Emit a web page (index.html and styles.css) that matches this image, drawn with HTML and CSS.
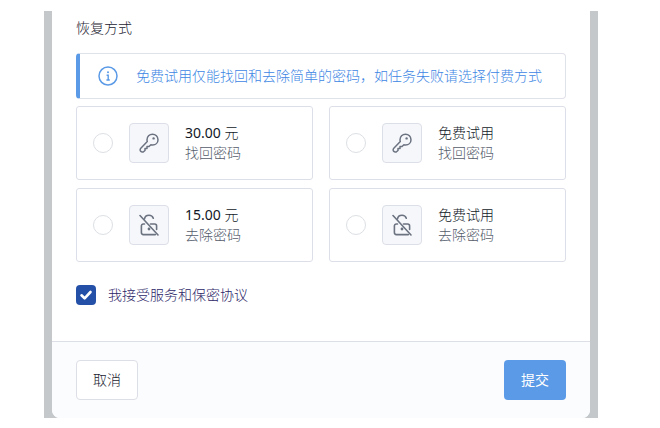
FILE: index.html
```html
<!DOCTYPE html>
<html lang="zh-CN">
<head>
<meta charset="utf-8">
<title>恢复方式</title>
<link rel="stylesheet" href="styles.css">
</head>
<body>
<div class="backdrop">
  <div class="modal">
    <div class="content">
      <div class="title">恢复方式</div>
      <div class="alert">
        <svg class="alert-icon" viewBox="0 0 20 20" width="20" height="20" fill="none" stroke="#5b9ae6" stroke-width="1.5">
          <circle cx="10" cy="10" r="9"/>
          <path d="M8.6 9.2H10.2V14M8.4 14H11.8" stroke-width="1.4"/>
          <circle cx="10" cy="6.2" r="1" fill="#5b9ae6" stroke="none"/>
        </svg>
        <span>免费试用仅能找回和去除简单的密码，如任务失败请选择付费方式</span>
      </div>
      <div class="options">
        <div class="card">
          <span class="radio"></span>
          <span class="tile">
            <svg viewBox="0 0 20 20" width="20" height="20" fill="none" stroke="#6b7280" stroke-width="1.5" stroke-linejoin="round">
              <path d="M13.5 1.2C16.6 1.2 19 3.6 19 6.7C19 9.8 16.6 12 13.6 12C13 12 12.4 11.9 11.9 11.7L10 13.5H8V15.5H6V17.5L4.5 18.8C3.4 19.4 1.8 18.8 1.3 17.6C1 16.7 1.2 15.8 1.8 15.2L8.3 8.5C8.1 8 8 7.3 8 6.7C8 3.6 10.4 1.2 13.5 1.2Z"/>
              <circle cx="14.6" cy="5.4" r="1.2" fill="#6b7280" stroke="none"/>
            </svg>
          </span>
          <span class="text"><span class="price"><span class="amount">30.00</span> 元</span><span class="sub">找回密码</span></span>
        </div>
        <div class="card">
          <span class="radio"></span>
          <span class="tile">
            <svg viewBox="0 0 20 20" width="20" height="20" fill="none" stroke="#6b7280" stroke-width="1.5" stroke-linejoin="round">
              <path d="M13.5 1.2C16.6 1.2 19 3.6 19 6.7C19 9.8 16.6 12 13.6 12C13 12 12.4 11.9 11.9 11.7L10 13.5H8V15.5H6V17.5L4.5 18.8C3.4 19.4 1.8 18.8 1.3 17.6C1 16.7 1.2 15.8 1.8 15.2L8.3 8.5C8.1 8 8 7.3 8 6.7C8 3.6 10.4 1.2 13.5 1.2Z"/>
              <circle cx="14.6" cy="5.4" r="1.2" fill="#6b7280" stroke="none"/>
            </svg>
          </span>
          <span class="text"><span class="price">免费试用</span><span class="sub">找回密码</span></span>
        </div>
        <div class="card">
          <span class="radio"></span>
          <span class="tile">
            <svg viewBox="0 0 20 22" width="20" height="22" fill="none" stroke="#6b7280" stroke-width="1.6" stroke-linecap="round" stroke-linejoin="round">
              <path d="M1 1.5 19 21"/>
              <path d="M5.5 5C5.8 2.8 7.8 1.2 10 1.2C12 1.2 13.7 2.4 14.3 4.2"/>
              <path d="M5.5 10H4.4C3.2 10 2.4 10.8 2.4 12V18.6C2.4 19.8 3.2 20.6 4.4 20.6H16.4M11.5 10H15.6C16.8 10 17.6 10.8 17.6 12V15.5"/>
              <circle cx="10" cy="15" r="1.4" fill="#6b7280" stroke="none"/>
            </svg>
          </span>
          <span class="text"><span class="price"><span class="amount">15.00</span> 元</span><span class="sub">去除密码</span></span>
        </div>
        <div class="card">
          <span class="radio"></span>
          <span class="tile">
            <svg viewBox="0 0 20 22" width="20" height="22" fill="none" stroke="#6b7280" stroke-width="1.6" stroke-linecap="round" stroke-linejoin="round">
              <path d="M1 1.5 19 21"/>
              <path d="M5.5 5C5.8 2.8 7.8 1.2 10 1.2C12 1.2 13.7 2.4 14.3 4.2"/>
              <path d="M5.5 10H4.4C3.2 10 2.4 10.8 2.4 12V18.6C2.4 19.8 3.2 20.6 4.4 20.6H16.4M11.5 10H15.6C16.8 10 17.6 10.8 17.6 12V15.5"/>
              <circle cx="10" cy="15" r="1.4" fill="#6b7280" stroke="none"/>
            </svg>
          </span>
          <span class="text"><span class="price">免费试用</span><span class="sub">去除密码</span></span>
        </div>
      </div>
      <div class="agree">
        <span class="check">
          <svg viewBox="0 0 20 20" width="20" height="20" fill="none" stroke="#fff" stroke-width="2.6" stroke-linecap="round" stroke-linejoin="round"><path d="M5.5 10.3 8.6 13.3 14.5 7"/></svg>
        </span>
        <span>我接受服务和保密协议</span>
      </div>
    </div>
    <div class="footer">
      <button class="btn btn-cancel" type="button">取消</button>
      <button class="btn btn-submit" type="button">提交</button>
    </div>
  </div>
</div>
</body>
</html>
```
FILE: styles.css
```css
* { box-sizing: border-box; }
html, body { margin: 0; padding: 0; background: #fff; }
body {
  width: 660px;
  height: 428px;
  overflow: hidden;
  padding: 11px 62px 10px 44px;
  font-family: "Noto Sans", "Noto Sans CJK SC", sans-serif;
  font-size: 14px;
  font-weight: 300;
  color: #111827;
}
.backdrop {
  height: 407px;
  padding: 0 8px;
  background: #c5c8cb;
}
.modal {
  height: 100%;
  display: flex;
  flex-direction: column;
  background: #fff;
  border-radius: 0 0 8px 8px;
  overflow: hidden;
}
.content {
  flex: 1;
  padding: 7px 24px 0;
}
.title {
  height: 20px;
  line-height: 20px;
  color: #1a2230;
}
.alert {
  margin-top: 15px;
  height: 46px;
  display: flex;
  align-items: center;
  gap: 18px;
  padding-left: 18px;
  line-height: 20px;
  border: 1px solid #e0e2ea;
  border-left: 4px solid #5b9ae6;
  border-radius: 4px;
  color: #3d86e4;
}
.alert-icon { flex: none; }
.options {
  margin-top: 7px;
  display: grid;
  grid-template-columns: 237px 237px;
  grid-auto-rows: 74px;
  column-gap: 16px;
  row-gap: 8px;
}
.card {
  display: flex;
  align-items: center;
  padding-left: 16px;
  border: 1px solid #dcdfe8;
  border-radius: 3px;
}
.radio {
  width: 20px;
  height: 20px;
  flex: none;
  border: 1px solid #dcdfe4;
  border-radius: 50%;
  background: #fff;
}
.tile {
  width: 40px;
  height: 40px;
  flex: none;
  margin-left: 16px;
  display: flex;
  align-items: center;
  justify-content: center;
  background: #f6f7fb;
  border: 1px solid #dcdfe8;
  border-radius: 4px;
}
.text {
  margin-left: 16px;
  display: flex;
  flex-direction: column;
  line-height: 20px;
}
.price { color: #111827; }
.amount { font-weight: 400; }
.sub { color: #545c6b; }
.agree {
  margin-top: 23px;
  display: flex;
  align-items: center;
  gap: 12px;
  line-height: 20px;
  color: #2c2668;
}
.check {
  width: 20px;
  height: 20px;
  flex: none;
  background: #2550a8;
  border-radius: 4px;
}
.check svg { display: block; }
.footer {
  height: 77px;
  flex: none;
  display: flex;
  justify-content: space-between;
  padding: 18px 24px 0;
  background: #fbfcfe;
  border-top: 1px solid #dcdfe6;
}
.btn {
  width: 62px;
  height: 40px;
  padding: 0;
  font: inherit;
  line-height: 20px;
  border-radius: 4px;
}
.btn-cancel { background: #fff; border: 1px solid #dcdfe6; color: #1a2230; }
.btn-submit { background: #5b9ae6; border: 0; color: #fff; font-weight: 400; }
```
